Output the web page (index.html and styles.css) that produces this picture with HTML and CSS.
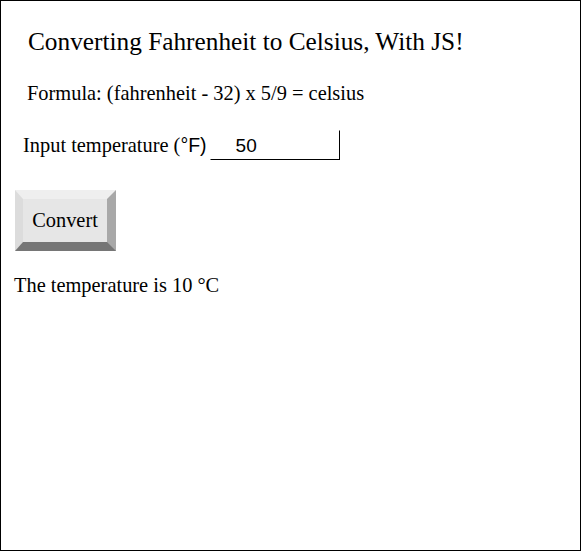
FILE: index.html
```html
<!DOCTYPE html>
<html>
<head>
<meta charset="utf-8">
<title>Fahrenheit to Celsius</title>
<link rel="stylesheet" href="styles.css">
</head>
<body>
<div class="page">
  <h1 class="title">Converting Fahrenheit to Celsius, With JS!</h1>
  <p class="formula">Formula: (fahrenheit - 32) x 5/9 = celsius</p>
  <div class="input-row">
    <label class="label" for="temp">Input temperature (<span class="unit">°F)</span></label>
    <input class="temp-input" id="temp" type="text" value="50">
  </div>
  <button class="convert">Convert</button>
  <p class="result">The temperature is 10 °C</p>
</div>
</body>
</html>
```
FILE: styles.css
```css
html, body {
  margin: 0;
  padding: 0;
  background: #fff;
}
.page {
  box-sizing: border-box;
  width: 581px;
  height: 551px;
  border: 1px solid #000;
  font-family: "Liberation Serif", serif;
  color: #000;
  display: flex;
  flex-direction: column;
  align-items: flex-start;
}
.title {
  margin: 26px 0 0 27px;
  font-size: 25.3px;
  line-height: 28px;
  font-weight: normal;
}
.formula {
  margin: 26px 0 0 26px;
  font-size: 20.4px;
  line-height: 24px;
}
.input-row {
  margin: 25px 0 0 22px;
  display: flex;
  align-items: center;
  gap: 3px;
}
.label {
  font-size: 20.4px;
  line-height: 24px;
}
.unit {
  font-family: "Liberation Sans", sans-serif;
  font-size: 19.5px;
}
.temp-input {
  box-sizing: border-box;
  width: 130px;
  height: 30px;
  margin: 0;
  padding: 1px 0 0 25px;
  border-style: solid;
  border-width: 1px;
  border-color: #fff #000 #000 #fff;
  font-family: "Liberation Sans", sans-serif;
  font-size: 19px;
  color: #000;
  background: #fff;
  outline: none;
}
.convert {
  box-sizing: border-box;
  margin: 30px 0 0 14px;
  width: 101px;
  height: 61px;
  padding: 0;
  border-style: solid;
  border-width: 9px 9px 9px 8px;
  border-color: #efefef #a8a8a8 #767676 #dcdcdc;
  background: #e6e6e6;
  font-family: "Liberation Serif", serif;
  font-size: 20.4px;
  color: #000;
}
.result {
  margin: 22px 0 0 13px;
  font-size: 20.4px;
  line-height: 24px;
}
```
